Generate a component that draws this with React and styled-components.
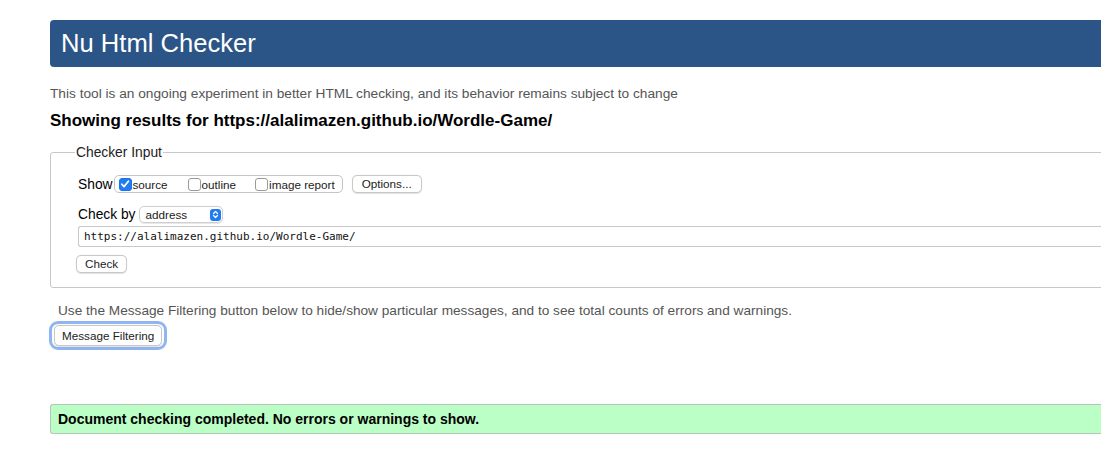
import React from "react";
import styled, { createGlobalStyle } from "styled-components";

const Global = createGlobalStyle`
  html, body { margin: 0; padding: 0; background: #fff; overflow: hidden; }
  body { font-family: "Liberation Sans", Arial, Helvetica, sans-serif; color: #000; }
`;

const Page = styled.div`
  width: 1300px;
  padding: 20px 0 0 50px;
  box-sizing: border-box;
`;

const Header = styled.h1`
  margin: 0;
  height: 47px;
  background: #2c5587;
  border-radius: 4px;
  color: #fff;
  font-weight: normal;
  font-size: 25.6px;
  line-height: 47px;
  padding-left: 11px;
`;

const Intro = styled.p`
  margin: 19px 0 0;
  font-size: 13.7px;
  line-height: 16px;
  color: #555;
`;

const Results = styled.h2`
  margin: 9px 0 0;
  font-size: 17px;
  line-height: 20px;
  font-weight: bold;
`;

const Fieldset = styled.fieldset`
  margin: 14px 0 0;
  padding: 6px 0 14px 27px;
  border: 1px solid #c8c8c8;
  border-radius: 3px;
  min-width: 0;
`;

const Legend = styled.legend`
  font-size: 13.8px;
  padding: 0 1px;
  margin-left: -3px;
  color: #222;
`;

const Row = styled.div`
  display: flex;
  align-items: center;
  gap: ${(p) => p.$gap || 4}px;
  margin-top: ${(p) => p.$mt || 0}px;
  font-size: 13.8px;
`;

const Group = styled.div`
  display: flex;
  align-items: center;
  height: 16px;
  padding: 0 7px 0 4px;
  border: 1px solid #c4c4c4;
  border-radius: 5px;
  font-size: 11.7px;
`;

const Choice = styled.label`
  display: flex;
  align-items: center;
  gap: 1px;
  margin-right: ${(p) => p.$mr || 0}px;
  color: #222;
`;

const Box = styled.span`
  width: 13px;
  height: 13px;
  box-sizing: border-box;
  border-radius: 3px;
  border: 1px solid ${(p) => (p.$on ? "#1a73e8" : "#9a9a9a")};
  background: ${(p) => (p.$on ? "#1f7cf2" : "#fff")};
  display: flex;
  align-items: center;
  justify-content: center;
`;

const Button = styled.button`
  font-family: "Liberation Sans", Arial, sans-serif;
  font-size: 11.7px;
  color: #222;
  background: #fff;
  border: 1px solid #c8c8c8;
  border-radius: 5px;
  height: ${(p) => p.$h || 18}px;
  padding: 0 ${(p) => p.$px || 8}px;
  margin-left: ${(p) => p.$ml || 0}px;
  line-height: 16px;
  box-shadow: 0 0.5px 1px rgba(0, 0, 0, 0.12);
`;

const Select = styled.div`
  display: flex;
  align-items: center;
  justify-content: space-between;
  width: 84px;
  height: 17px;
  box-sizing: border-box;
  padding: 0 1px 0 6px;
  border: 1px solid #cfcfcf;
  border-radius: 5px;
  font-size: 11.7px;
  color: #222;
  box-shadow: 0 0.5px 1px rgba(0, 0, 0, 0.1);
`;

const Stepper = styled.span`
  width: 11px;
  height: 12px;
  border-radius: 3px;
  background: #1f7cf2;
  display: flex;
  align-items: center;
  justify-content: center;
`;

const UrlInput = styled.div`
  margin-top: 3px;
  height: 21px;
  box-sizing: border-box;
  border: 1px solid #c8c8c8;
  border-right: none;
  border-radius: 3px 0 0 3px;
  padding-left: 5px;
  font-family: "DejaVu Sans Mono", Menlo, monospace;
  font-size: 11px;
  line-height: 19px;
  color: #111;
`;

const CheckRow = styled.div`
  display: flex;
  margin-top: 8px;
  margin-left: -2px;
`;

const Note = styled.p`
  margin: 15px 0 0 8px;
  font-size: 13.65px;
  line-height: 16px;
  color: #555;
`;

const FocusWrap = styled.div`
  display: flex;
  width: fit-content;
  margin: 2px 0 0 -1px;
  padding: 1px 2px;
  border: 3px solid #8fb6f2;
  border-radius: 9px;
  background: #fff;
`;

const Success = styled.div`
  margin-top: 54px;
  height: 30px;
  box-sizing: border-box;
  background: #bbffc6;
  border: 1px solid #b4c8b8;
  border-right: none;
  border-radius: 3px 0 0 3px;
  padding-left: 7px;
  font-size: 14px;
  font-weight: bold;
  line-height: 28px;
`;

const Check = () => (
  <svg width="10" height="10" viewBox="0 0 10 10">
    <path d="M1.8 5.2 L4 7.6 L8.4 2.2" fill="none" stroke="#fff" strokeWidth="1.7" strokeLinecap="round" strokeLinejoin="round" />
  </svg>
);

const Arrows = () => (
  <svg width="7" height="9" viewBox="0 0 7 9">
    <path d="M1.5 3.5 L3.5 1.5 L5.5 3.5 M1.5 5.5 L3.5 7.5 L5.5 5.5" fill="none" stroke="#fff" strokeWidth="1.2" strokeLinecap="round" strokeLinejoin="round" />
  </svg>
);

export default function App() {
  return (
    <>
      <Global />
      <Page>
        <Header>Nu Html Checker</Header>
        <Intro>This tool is an ongoing experiment in better HTML checking, and its behavior remains subject to change</Intro>
        <Results>Showing results for https://alalimazen.github.io/Wordle-Game/</Results>
        <Fieldset>
          <Legend>Checker Input</Legend>
          <Row $mt={9} $gap={1}>
            <span>Show</span>
            <Group>
              <Choice $mr={20}><Box $on><Check /></Box>source</Choice>
              <Choice $mr={19}><Box />outline</Choice>
              <Choice><Box />image report</Choice>
            </Group>
            <Button $px={9} $ml={8}>Options...</Button>
          </Row>
          <Row $mt={13} $gap={3}>
            <span>Check by</span>
            <Select>address<Stepper><Arrows /></Stepper></Select>
          </Row>
          <UrlInput>https://alalimazen.github.io/Wordle-Game/</UrlInput>
          <CheckRow><Button $px={8}>Check</Button></CheckRow>
        </Fieldset>
        <Note>Use the Message Filtering button below to hide/show particular messages, and to see total counts of errors and warnings.</Note>
        <FocusWrap><Button $px={7} $h={21}>Message Filtering</Button></FocusWrap>
        <Success>Document checking completed. No errors or warnings to show.</Success>
      </Page>
    </>
  );
}
